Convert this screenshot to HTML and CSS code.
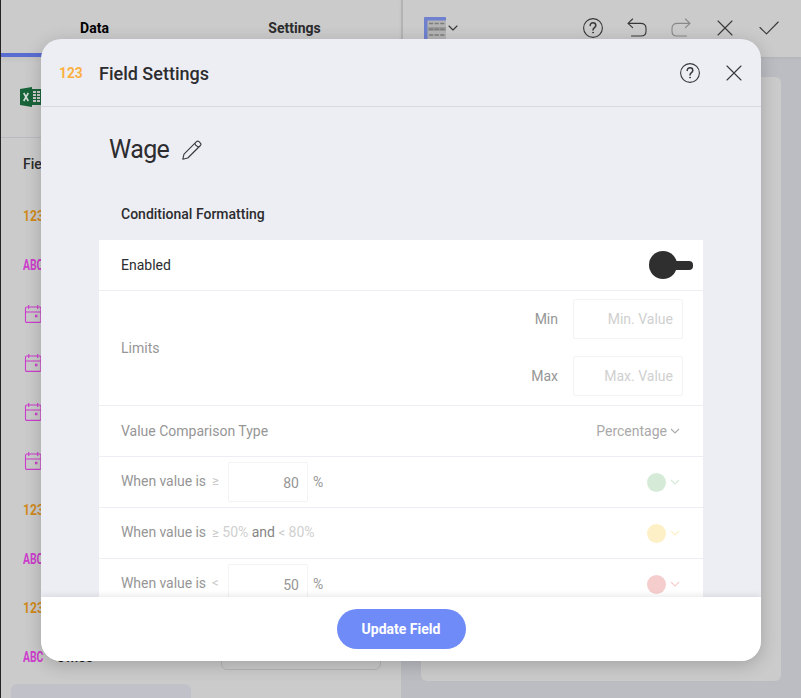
FILE: index.html
```html
<!DOCTYPE html>
<html lang="en">
<head>
<meta charset="utf-8">
<title>Field Settings</title>
<link rel="stylesheet" href="styles.css">
</head>
<body>
<svg class="defs" width="0" height="0" aria-hidden="true">
  <symbol id="help" viewBox="0 0 22 22"><circle cx="11" cy="11" r="9.4"/><path d="M8.2 8.6C8.2 6.9 9.4 5.8 11 5.8s2.8 1 2.8 2.6c0 2.2-2.8 2.3-2.8 4.6" stroke-width="1.5"/><circle cx="11" cy="15.6" r=".5" stroke-width="1"/></symbol>
  <symbol id="close" viewBox="0 0 16 16"><path d="M1 1l14 14M15 1L1 15"/></symbol>
  <symbol id="chevron" viewBox="0 0 10 6"><path d="M1 1l4 4 4-4"/></symbol>
  <symbol id="calendar" viewBox="0 0 18 20"><rect x="1.500" y="3" width="15.400" height="15.400" rx="1.200"/><path d="M1.500 8h15.400M4.700 1v4M13.700 1v4"/><path d="M11.500 11.300h1.400v1.400h-1.400z"/></symbol>
</svg>

<div class="app">
  <aside class="panel">
    <nav class="tabs">
      <div class="tab tab-active">Data</div>
      <div class="tab">Settings</div>
    </nav>
    <div class="source">
      <svg width="24" height="20" viewBox="0 0 24 20"><rect x="12" y="2" width="12" height="16" fill="#1b653c"/><path d="M13 4h3v2h-3zm4 0h3v2h-3zm-4 3h3v2h-3zm4 0h3v2h-3zm-4 3h3v2h-3zm4 0h3v2h-3zm-4 3h3v2h-3zm4 0h3v2h-3z" fill="#cbcbcb"/><path d="M0 2L12 0v20L0 18z" fill="#17643a"/><path d="M3.700 6l4.600 8M8.300 6l-4.600 8" stroke="#d5ddd8" stroke-width="1.600"/></svg>
    </div>
    <div class="fields-title">Fields</div>
    <ul class="fields">
      <li><span class="num">123</span></li>
      <li><span class="abc">ABC</span></li>
      <li><svg class="cal"><use href="#calendar"/></svg></li>
      <li><svg class="cal"><use href="#calendar"/></svg></li>
      <li><svg class="cal"><use href="#calendar"/></svg></li>
      <li><svg class="cal"><use href="#calendar"/></svg></li>
      <li><span class="num">123</span></li>
      <li><span class="abc">ABC</span></li>
      <li><span class="num">123</span></li>
      <li><span class="abc">ABC</span><span class="name">Office</span><span class="dropzone"></span></li>
    </ul>
    <div class="calc"></div>
  </aside>
  <main class="stage">
    <header class="toolbar">
      <svg width="22" height="22" viewBox="0 0 22 22"><path d="M0 0h22v22H0z" fill="#b4b4b4"/><path d="M4 10h18v4H4z" fill="#9b9b9b"/><path d="M0 22V1q0-1 1-1h20q1 0 1 1v2.600H3.500V22z" fill="#6f80ce"/><path d="M5 6.500h15.500M5 12.200h15.500M5 18h15.500" stroke="#7d7d7d" stroke-width="1.500" stroke-dasharray="4.200 1.400"/></svg>
      <svg class="line tb-chev"><use href="#chevron"/></svg>
      <span class="grow"></span>
      <svg class="line help"><use href="#help"/></svg>
      <svg class="line undo" viewBox="0 0 20 20"><path d="M5.600 1L1 5.400l4.600 4.300M1 5.400h12.500c3.500 0 5.500 1.800 5.500 5v2.800c0 3-2 4.800-5 4.800H4.500"/></svg>
      <svg class="line redo" viewBox="0 0 20 20"><path d="M14.400 1L19 5.400l-4.600 4.300M19 5.400H6.500C3 5.400 1 7.200 1 10.400v2.800c0 3 2 4.800 5 4.800h9.500"/></svg>
      <svg class="line close"><use href="#close"/></svg>
      <svg class="line check" viewBox="0 0 20 14"><path d="M1 6.500l6.500 6.400L19.200 1"/></svg>
    </header>
    <div class="canvas"></div>
  </main>
</div>

<section class="modal">
  <header class="modal-head">
    <span class="type"><span>123</span></span>
    <h1>Field Settings</h1>
    <span class="grow"></span>
    <svg class="line help"><use href="#help"/></svg>
    <svg class="line close"><use href="#close"/></svg>
  </header>
  <div class="modal-body">
    <div class="field-name">Wage
      <svg class="line pencil" viewBox="0 0 20 20"><path d="M.8 19.200l1.200-5L14.500 1.700q1.300-1.200 2.500 0l1.400 1.400q1.100 1.200 0 2.400L5.800 18zM13 3.200q.2 1.600 1.300 2.500 1 1 2.600 1.300"/></svg>
    </div>
    <h2>Conditional Formatting</h2>
    <div class="card">
      <div class="row enabled"><span>Enabled</span><span class="grow"></span><span class="toggle"><i class="knob"></i><i class="track"></i></span></div>
      <div class="row limits"><span>Limits</span><span class="grow"></span>
        <div class="inputs">
          <label>Min <span class="input">Min. Value</span></label>
          <label>Max <span class="input">Max. Value</span></label>
        </div>
      </div>
      <div class="row"><span>Value Comparison Type</span><span class="grow"></span><span class="select">Percentage</span><svg class="chev"><use href="#chevron"/></svg></div>
      <div class="row rule green"><span class="when">When value is</span><span class="op">≥</span><span class="value">80</span><span class="pct">%</span><span class="grow"></span><i class="dot"></i><svg class="chev"><use href="#chevron"/></svg></div>
      <div class="row rule yellow"><span class="when">When value is</span><span class="range"><b>≥</b> 50% <em>and</em> <b>&lt;</b> 80%</span><span class="grow"></span><i class="dot"></i><svg class="chev"><use href="#chevron"/></svg></div>
      <div class="row rule red"><span class="when">When value is</span><span class="op">&lt;</span><span class="value">50</span><span class="pct">%</span><span class="grow"></span><i class="dot"></i><svg class="chev"><use href="#chevron"/></svg></div>
    </div>
  </div>
  <footer class="modal-foot"><button>Update Field</button></footer>
</section>
</body>
</html>
```
FILE: styles.css
```css
* { box-sizing: border-box; }
body { margin: 0; width: 801px; height: 698px; overflow: hidden; font: 14px/20px Roboto, sans-serif; color: #2c2c2e; }
.defs { position: absolute; }
svg { flex: none; }
.grow { flex: 1; }
.line { fill: none; stroke: #38383b; stroke-width: 1.1; stroke-linecap: round; stroke-linejoin: round; }
.help { width: 22px; height: 22px; }
.close { width: 16px; height: 16px; }

.app { display: grid; grid-template-columns: 401px 400px; height: 698px; background: #bcbdc3; }
.panel { background: #cbcbcb; border-left: 1px solid #242426; overflow: hidden; }
.tabs { display: flex; height: 57px; box-shadow: 0 2px 5px rgba(0, 0, 0, .06); }
.tab { width: 200px; padding: 18px 13px 0 0; text-align: center; font-weight: 700; }
.tab-active { color: #000; border-bottom: 4px solid #596dd0; }
.source { height: 81px; padding: 30px 0 0 19px; border-bottom: 1px solid #b9b9c0; }
.fields-title { height: 53px; padding: 16px 0 0 22px; font-weight: 500; }
.fields { list-style: none; margin: 0; padding: 0; }
.fields li { display: flex; align-items: center; height: 49px; padding-left: 22px; }
.num, .abc { flex: none; width: 21px; font-size: 14px; font-weight: 700; transform-origin: left; white-space: nowrap; }
.num { color: #d18a1b; transform: scaleX(.87); }
.abc { color: #cd3dcd; transform: scaleX(.74); }
.cal { width: 18px; height: 20px; margin-left: 1px; fill: none; stroke: #cd3dcd; stroke-width: 1.1; }
.name { width: 165px; margin-left: 12px; color: #1b1b1d; font-weight: 500; }
.dropzone { width: 160px; height: 26px; border: 1px solid #b5b5b5; border-radius: 6px; }
.calc { width: 180px; height: 30px; margin: 3px 0 0 10px; border-radius: 6px; background: #c1c2c9; }

.stage { display: flex; flex-direction: column; }
.toolbar { display: flex; height: 57px; padding: 0 22px 1px 21px; align-items: center; background: #cbcbcb; border-left: 2px solid #b3b3b3; box-shadow: 0 1px 3px rgba(0, 0, 0, .06); }
.tb-chev { width: 10px; height: 6px; margin: -1px 0 0 2px; }
.undo { width: 20px; height: 20px; margin-left: 23px; }
.redo { width: 20px; height: 20px; margin-left: 24px; opacity: .45; }
.toolbar .close { margin-left: 26px; }
.check { width: 20px; height: 14px; margin: 0 0 0 26px; }
.canvas { height: 604px; margin: 20px 20px 0; background: #cbcbcb; border-radius: 6px; }

.modal { position: absolute; left: 41px; top: 39px; width: 720px; height: 622px; display: flex; flex-direction: column; overflow: hidden; border-radius: 20px; background: #edeef4; box-shadow: 0 4px 18px rgba(0, 0, 0, .2); }
.modal-head { display: flex; align-items: center; height: 68px; padding: 0 19px 0 18px; border-bottom: 1px solid #d8d9df; }
.type { width: 40px; margin-top: 1px; color: #fbb040; font-size: 15px; font-weight: 700; }
.type span { display: inline-block; transform: scaleX(.92); transform-origin: left; }
h1 { margin: 3px 0 0; font-size: 18px; line-height: 24px; font-weight: 500; }
.modal-head .close { margin-left: 25px; }
.modal-body { height: 490px; padding: 0 58px; overflow: hidden; }
.field-name { display: flex; align-items: center; gap: 13px; height: 85px; padding-left: 10px; font-size: 25px; letter-spacing: -.6px; }
.pencil { width: 20px; height: 20px; }
h2 { margin: 0; height: 48px; padding: 12px 0 0 22px; font-size: 14px; line-height: 20px; font-weight: 500; }
.card { background: #fff; }
.row { display: flex; align-items: center; height: 51px; padding: 0 23px 0 22px; border-bottom: 1px solid #edeef4; color: #969696; }
.enabled { padding-right: 10px; color: #2c2c2e; }
.toggle { display: flex; align-items: center; }
.knob { width: 28px; height: 28px; border-radius: 50%; background: #2f2f30; }
.track { width: 18px; height: 9px; margin-left: -2px; border-radius: 0 4px 4px 0; background: #2f2f30; }
.limits { height: 115px; padding-right: 20px; }
.inputs { display: flex; flex-direction: column; gap: 17px; margin-top: -1px; }
.inputs label { display: flex; align-items: center; justify-content: flex-end; gap: 15px; }
.input { width: 110px; height: 40px; padding: 9px; border: 1px solid #f3f3f5; border-radius: 2px; text-align: right; color: #d0d0d0; }
.select { color: #a9a9a9; }
.chev { width: 10px; height: 6px; margin-left: 3px; fill: none; stroke: #aaa; stroke-width: 1.1; }
.when { width: 85px; margin-top: -2px; white-space: nowrap; letter-spacing: -.06px; }
.op { width: 22px; margin-top: -2px; padding-left: 6px; color: #c8c8c8; font-size: 13px; }
.value { width: 80px; height: 40px; margin-top: -1px; padding: 10px 8px 0; border: 1px solid #f3f3f5; border-radius: 2px; text-align: right; }
.pct { margin: -1px 0 0 5px; }
.range { margin: -2px 0 0 6px; color: #d0d0d0; }
.range b { font-size: 13px; font-weight: 400; color: #c8c8c8; }
.range em { font-style: normal; color: #858585; }
.dot { width: 19px; height: 19px; border-radius: 50%; background: currentColor; }
.row .dot + .chev { margin-left: 4px; stroke: currentColor; }
.green .dot, .green .chev { color: #d5ebd7; }
.yellow .dot, .yellow .chev { color: #fdf0c6; }
.red .dot, .red .chev { color: #f6cdcd; }
.modal-foot { display: flex; justify-content: center; height: 64px; padding-top: 12px; background: #fff; box-shadow: 0 -1px 7px rgba(0, 0, 0, .1); z-index: 1; }
button { width: 129px; height: 40px; padding: 0; border: 0; border-radius: 20px; background: #6f8bf7; color: #fff; font: 700 14px/20px Roboto, sans-serif; }
```
